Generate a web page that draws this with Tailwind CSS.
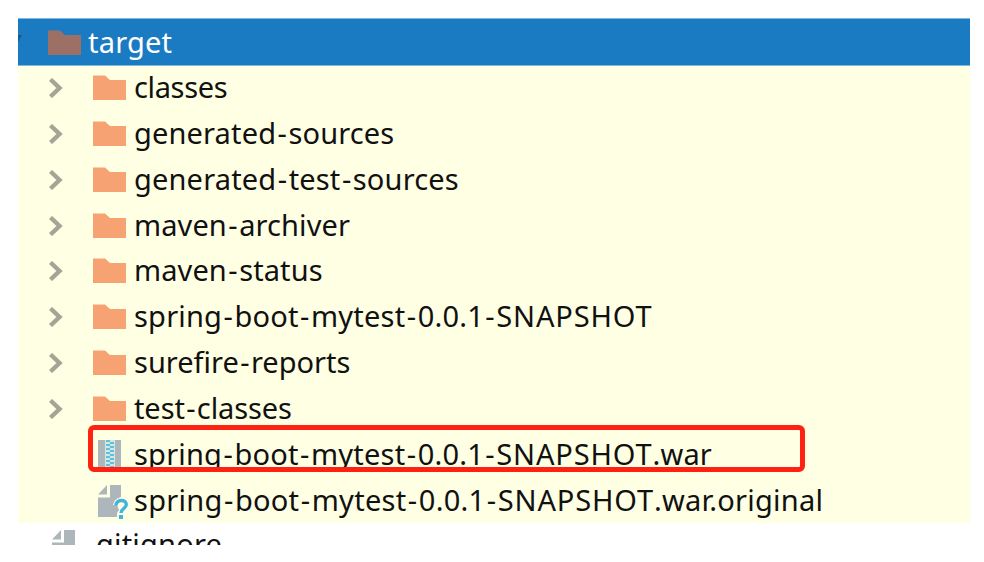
<!DOCTYPE html>
<html lang="en">
<head>
<meta charset="utf-8">
<title>Project tree</title>
<script src="https://cdn.jsdelivr.net/npm/@tailwindcss/browser@4"></script>
</head>
<body class="bg-white w-[984px] h-[562px] overflow-hidden">
<svg class="hidden">
  <symbol id="folder" viewBox="0 0 33 25"><path d="M0 0.5H12L17 5H33V25H0Z" fill="currentColor"/></symbol>
  <symbol id="chev" viewBox="0 0 14 20"><path d="M1.5 1.5L10.5 10L1.5 18.5" fill="none" stroke="#a5a596" stroke-width="4.4"/></symbol>
  <symbol id="file" viewBox="0 0 24 33"><path d="M0 9.5L9 0V9.5ZM12 0H23V32H0V12.5H12Z" fill="#adb7bb"/></symbol>
</svg>
<main class="relative ml-[18px] w-[952px] pt-[18px] font-['Noto_Sans','Open_Sans',sans-serif] text-[29px] leading-[41px] text-[#111] whitespace-nowrap">
  <div class="flex h-[48px] border-y border-[#7db8de] bg-[#1b7bc2] text-white">
    <svg class="mt-[15px] h-[9px] w-[4px]" viewBox="0 0 4 9"><path d="M0 1H4L0 8Z" fill="#175987"/></svg>
    <svg class="ml-[25.5px] mt-[10.5px] h-[25px] w-[33px] text-[#9c7064]"><use href="#folder"/></svg>
    <span class="ml-[7.5px] pt-[2px] tracking-[0.2px]">target</span>
  </div>
  <div id="rows" class="h-[457px] bg-[#ffffe4]"></div>
  <div class="flex h-[22px] overflow-hidden">
    <svg class="ml-[34px] mt-[7px] h-[33px] w-[24px] shrink-0"><use href="#file"/></svg>
    <span class="ml-[12px] tracking-[0.2px]">.gitignore</span>
  </div>
  <div class="absolute left-[70px] top-[425px] h-[46.5px] w-[717px] rounded-[6px] border-[5.5px] border-[#ff2112]"></div>
</main>
<script>
const rows = [
  ['classes', -0.35], ['generated-sources', 0.15], ['generated-test-sources', 0.17],
  ['maven-archiver', 0.1], ['maven-status', 0.1], ['spring-boot-mytest-0.0.1-SNAPSHOT', 0.2],
  ['surefire-reports', 0], ['test-classes', -0.1],
  ['spring-boot-mytest-0.0.1-SNAPSHOT.war', 0.2, 'war'],
  ['spring-boot-mytest-0.0.1-SNAPSHOT.war.original', 0.26, 'unknown']
];
let teeth = '';
for (let y = 0; y < 26; y += 4) {
  teeth += `<rect x="8" y="${y}" width="4" height="2"/><rect x="12" y="${y + 2}" width="4" height="2"/>`;
}
const icons = {
  folder: '<svg class="h-[20px] w-[14px] mt-[12px] ml-[30.5px]"><use href="#chev"/></svg><svg class="ml-[30.5px] mt-[9px] h-[25px] w-[33px] text-[#f7a272]"><use href="#folder"/></svg>',
  war: `<svg class="ml-[80px] mr-[5px] mt-[7px] h-[27px] w-[23px]" viewBox="0 0 23 27"><path d="M0 0H7V27H0ZM17 0H23V27H17Z" fill="#adb7bb"/><path d="M7 0H17V27H7Z" fill="#d5e6df"/><g fill="#5fbfe0">${teeth}</g></svg>`,
  unknown: '<svg class="ml-[80px] -mr-[4px] mt-[6px] h-[36px] w-[32px]" viewBox="0 0 32 36"><path d="M0 9.5L9 0V9.5ZM12 0H23V12Q16 14 15 20H19L21 25L19 28V32H0V12.5H12Z" fill="#adb7bb"/><path d="M18 20.5C18 14 28.3 14 28.3 19.5C28.3 23.5 23 23.5 23 28" fill="none" stroke="#41b4e0" stroke-width="3.4"/><path d="M21 30H25V34H21Z" fill="#41b4e0"/></svg>'
};
document.getElementById('rows').innerHTML = rows.map(([name, spacing, kind = 'folder']) => {
  const text = name.split(/(-|SNAPSHOT)/).map(part =>
    part === '-' ? '<span class="px-[1.4px]">-</span>' :
    part === 'SNAPSHOT' ? '<span class="tracking-[0.85px]">SNAPSHOT</span>' : part).join('');
  const clip = kind === 'war' ? 'max-h-[37px] overflow-hidden' : '';
  return `<div class="flex h-[45.85px]">${icons[kind]}<span class="ml-[8px] ${clip}" style="letter-spacing:${spacing}px">${text}</span></div>`;
}).join('');
</script>
</body>
</html>
